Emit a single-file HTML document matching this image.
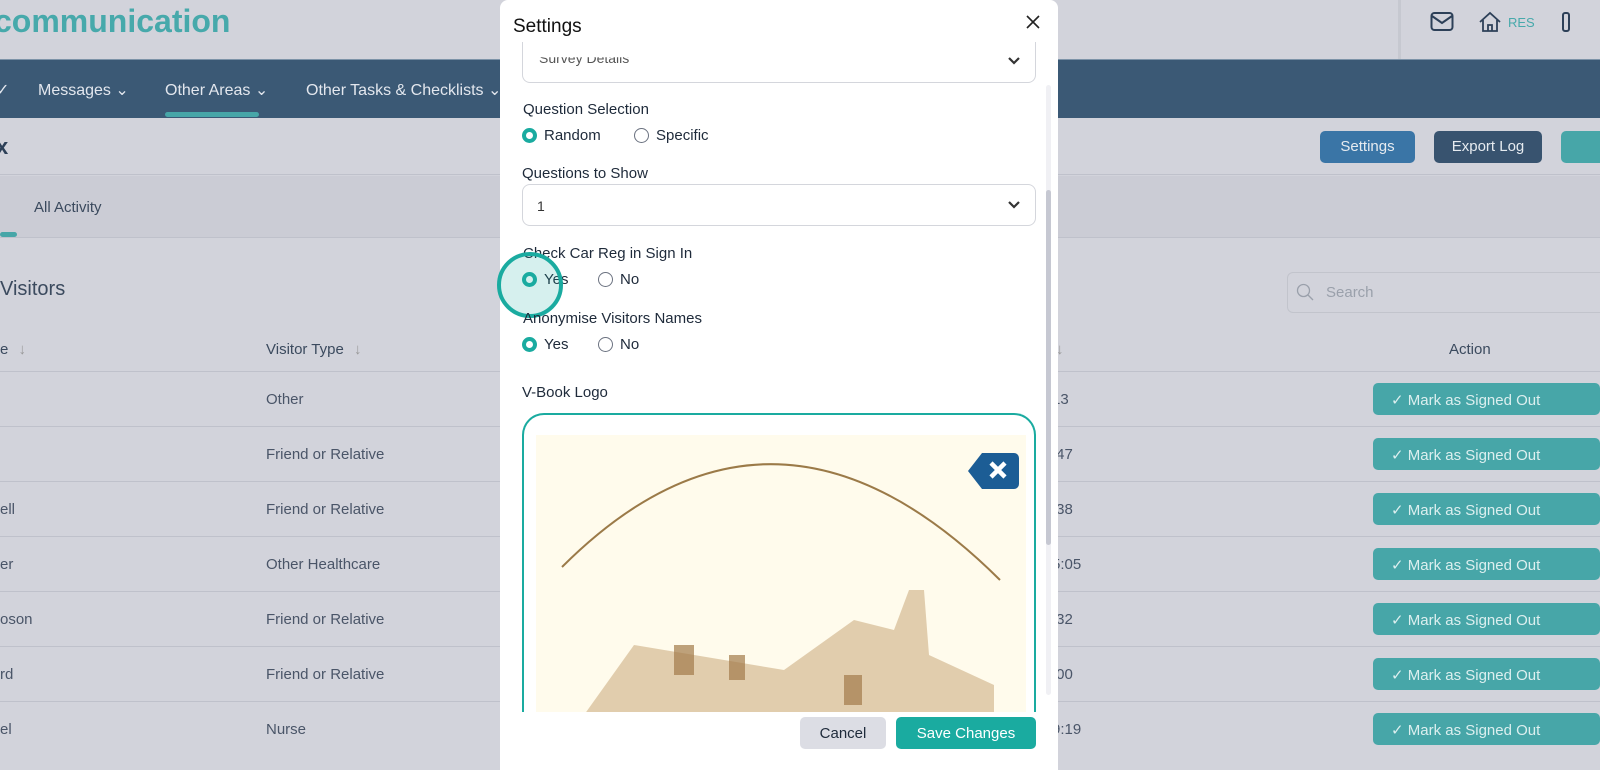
<!DOCTYPE html>
<html><head><style>
*{box-sizing:border-box;margin:0;padding:0}
body{width:1600px;height:770px;overflow:hidden;background:#d2d3db;font-family:"Liberation Sans",sans-serif;position:relative;color:#3b4a5e}
.abs{position:absolute}
.nav{top:59px;left:0;width:1600px;height:59px;background:#3b5975;border-top:1px solid #7d93a8}
.nav span{position:absolute;top:20px;color:#e3e7ee;font-size:16px}
.btn{position:absolute;border-radius:5px;color:#e6ebf0;font-size:15px;text-align:center}
.row{position:absolute;left:0;width:1600px;height:55px;border-top:1px solid #bfc1cb}
.row span{position:absolute;top:19px;font-size:15px;color:#4a5568}
.mk{position:absolute;left:1373px;top:11px;width:227px;height:32px;background:#47a6a8;border-radius:5px;color:#dcefef;font-size:15px;padding:8px 0 0 18px}
.modal{left:500px;top:0;width:558px;height:770px;background:#fff;border-radius:8px 8px 0 0}
.lbl{position:absolute;left:22px;font-size:15px;color:#1e2a3a}
.radio{position:absolute;width:15px;height:15px;border-radius:50%;border:1.5px solid #6b7280}
.radio.on{border:4px solid #1aaba0}
.rt{position:absolute;font-size:15px;color:#1e2a3a}
.sel{position:absolute;left:22px;width:514px;height:42px;border:1px solid #d4d6dc;border-radius:8px}
</style></head><body>
<div class="abs" style="left:-6px;top:3px;font-size:32px;font-weight:bold;color:#47a9ab">communication</div>
<div class="abs" style="left:1398px;top:0;width:3px;height:59px;background:#c6c8d0"></div>
<svg class="abs" style="left:1430px;top:11px" width="24" height="22" viewBox="0 0 24 22"><rect x="1.5" y="2" width="21" height="17" rx="3" fill="none" stroke="#2d4058" stroke-width="2"/><path d="M2 5l10 7 10-7" fill="none" stroke="#2d4058" stroke-width="2"/></svg>
<svg class="abs" style="left:1478px;top:10px" width="24" height="24" viewBox="0 0 24 24"><path d="M2 12L12 3l10 9M5 10v11h14V10M10 21v-6h4v6" fill="none" stroke="#2d4058" stroke-width="1.8"/></svg>
<div class="abs" style="left:1508px;top:15px;color:#47a9ab;font-size:13px">RES</div>
<div class="abs" style="left:1562px;top:12px;width:8px;height:20px;border:2px solid #2d4058;border-radius:3px"></div>
<div class="abs nav">
<span style="left:-4px">✓</span><span style="left:38px">Messages ⌄</span><span style="left:165px">Other Areas ⌄</span><span style="left:306px">Other Tasks &amp; Checklists ⌄</span>
<div class="abs" style="left:165px;top:52px;width:94px;height:5px;background:#47a6a8;border-radius:3px"></div></div>
<div class="abs" style="left:-4px;top:134px;font-size:22px;color:#2d4058;font-weight:bold">x</div>
<div class="btn" style="left:1320px;top:131px;width:95px;height:32px;background:#3a75a6;padding-top:7px">Settings</div>
<div class="btn" style="left:1434px;top:131px;width:108px;height:32px;background:#38536f;padding-top:7px">Export Log</div>
<div class="btn" style="left:1561px;top:131px;width:50px;height:32px;background:#47a6a8"></div>
<div class="abs" style="left:0;top:174px;width:1600px;height:1px;background:#bfc1cb"></div>
<div class="abs" style="left:0;top:176px;width:1600px;height:61px;background:#cbccd5"></div>
<div class="abs" style="left:34px;top:199px;font-size:15px">All Activity</div>
<div class="abs" style="left:0;top:232px;width:17px;height:5px;background:#47a6a8;border-radius:3px"></div>
<div class="abs" style="left:0;top:237px;width:1600px;height:1px;background:#bfc1cb"></div>
<div class="abs" style="left:0;top:278px;font-size:20px;color:#3b4a5e">Visitors</div>
<div class="abs" style="left:1287px;top:272px;width:320px;height:41px;border:1px solid #c2c4cc;border-radius:6px"></div>
<svg class="abs" style="left:1296px;top:283px" width="18" height="18" viewBox="0 0 18 18"><circle cx="7.5" cy="7.5" r="6" fill="none" stroke="#9aa0ab" stroke-width="1.3"/><path d="M12 12l5 5" stroke="#9aa0ab" stroke-width="1.3"/></svg>
<div class="abs" style="left:1326px;top:284px;font-size:15px;color:#9aa0ab">Search</div>
<div class="abs" style="left:0;top:341px;font-size:15px">e <span style="color:#999;margin-left:6px">↓</span></div>
<div class="abs" style="left:266px;top:341px;font-size:15px">Visitor Type <span style="color:#999;margin-left:6px">↓</span></div>
<div class="abs" style="left:1056px;top:341px;font-size:15px;color:#999">↓</div>
<div class="abs" style="left:1449px;top:341px;font-size:15px">Action</div>
<div class="row" style="top:371px"><span style="left:266px">Other</span><span style="left:1052px">13</span><div class="mk">✓ Mark as Signed Out</div></div>
<div class="row" style="top:426px"><span style="left:266px">Friend or Relative</span><span style="left:1052px">:47</span><div class="mk">✓ Mark as Signed Out</div></div>
<div class="row" style="top:481px"><span style="left:0">ell</span><span style="left:266px">Friend or Relative</span><span style="left:1052px">:38</span><div class="mk">✓ Mark as Signed Out</div></div>
<div class="row" style="top:536px"><span style="left:0">er</span><span style="left:266px">Other Healthcare</span><span style="left:1052px">5:05</span><div class="mk">✓ Mark as Signed Out</div></div>
<div class="row" style="top:591px"><span style="left:0">oson</span><span style="left:266px">Friend or Relative</span><span style="left:1052px">:32</span><div class="mk">✓ Mark as Signed Out</div></div>
<div class="row" style="top:646px"><span style="left:0">rd</span><span style="left:266px">Friend or Relative</span><span style="left:1052px">:00</span><div class="mk">✓ Mark as Signed Out</div></div>
<div class="row" style="top:701px"><span style="left:0">el</span><span style="left:266px">Nurse</span><span style="left:1052px">9:19</span><div class="mk">✓ Mark as Signed Out</div></div>

<div class="abs modal">
<div class="abs" style="left:13px;top:16px;font-size:19px;color:#111">Settings</div>
<svg class="abs" style="left:526px;top:15px" width="14" height="14" viewBox="0 0 14 14"><path d="M1 1l12 12M13 1L1 13" stroke="#222" stroke-width="1.6"/></svg>
<div class="sel" style="top:42px;border-top:none;border-radius:0 0 8px 8px;height:41px"><div class="abs" style="left:16px;top:8px;font-size:14px;color:#555;clip-path:inset(45% 0 0 0)">Survey Details</div><svg class="abs" style="right:14px;top:14px" width="14" height="10" viewBox="0 0 14 10"><path d="M2 2l5 5 5-5" fill="none" stroke="#333" stroke-width="2.2"/></svg></div>
<div class="abs" style="left:546px;top:85px;width:5px;height:610px;background:#f0f0f4;border-radius:3px"></div>
<div class="abs" style="left:546px;top:190px;width:5px;height:355px;background:#c6c8d2;border-radius:3px"></div>
<div class="lbl" style="left:23px;top:101px">Question Selection</div>
<div class="radio on" style="left:22px;top:128px"></div><div class="rt" style="left:44px;top:127px">Random</div>
<div class="radio" style="left:134px;top:128px"></div><div class="rt" style="left:156px;top:127px">Specific</div>
<div class="lbl" style="top:165px">Questions to Show</div>
<div class="sel" style="top:184px"><div class="abs" style="left:14px;top:13px;font-size:14px;color:#333">1</div><svg class="abs" style="right:14px;top:15px" width="14" height="10" viewBox="0 0 14 10"><path d="M2 2l5 5 5-5" fill="none" stroke="#333" stroke-width="2.2"/></svg></div>
<div class="lbl" style="left:23px;top:245px">Check Car Reg in Sign In</div>
<div class="radio on" style="left:22px;top:272px"></div><div class="rt" style="left:44px;top:271px">Yes</div>
<div class="radio" style="left:98px;top:272px"></div><div class="rt" style="left:120px;top:271px">No</div>
<div class="abs" style="left:-3px;top:252px;width:66px;height:66px;border-radius:50%;border:4px solid #1aaba0;background:rgba(26,171,160,0.18)"></div>
<div class="lbl" style="left:23px;top:310px">Anonymise Visitors Names</div>
<div class="radio on" style="left:22px;top:337px"></div><div class="rt" style="left:44px;top:336px">Yes</div>
<div class="radio" style="left:98px;top:337px"></div><div class="rt" style="left:120px;top:336px">No</div>
<div class="lbl" style="top:384px">V-Book Logo</div>
<div class="abs" style="left:22px;top:413px;width:514px;height:299px;border:2px solid #1aaba0;border-bottom:none;border-radius:22px 22px 0 0;overflow:hidden;background:#fff">
<div class="abs" style="left:12px;top:20px;width:490px;height:300px;background:#fffbec"></div>
<svg class="abs" style="left:0;top:0" width="514" height="300" viewBox="0 0 514 300"><path d="M38 152 Q250 -60 476 165" fill="none" stroke="#9b7a48" stroke-width="2"/>
<path d="M110 230 L260 255 L330 205 L370 215 L385 175 L400 175 L405 240 L470 270 L470 300 L60 300Z" fill="#c9a77a" opacity="0.55"/>
<rect x="150" y="230" width="20" height="30" fill="#a27a4a" opacity="0.7"/><rect x="205" y="240" width="16" height="25" fill="#a27a4a" opacity="0.7"/><rect x="320" y="260" width="18" height="30" fill="#a27a4a" opacity="0.7"/></svg>
<svg class="abs" style="left:444px;top:36px" width="52" height="40" viewBox="0 0 52 40"><path d="M0 20 L14 2 H46 a5 5 0 0 1 5 5 V33 a5 5 0 0 1 -5 5 H14Z" fill="#1c5d95"/><path d="M23 12l14 14M37 12L23 26" stroke="#fff" stroke-width="4.5"/></svg>
</div>
<div class="abs" style="left:0;top:712px;width:558px;height:58px;background:#fff"></div>
<div class="btn" style="left:300px;top:717px;width:86px;height:32px;background:#dcdde4;color:#1e2a3a;padding-top:8px">Cancel</div>
<div class="btn" style="left:396px;top:717px;width:140px;height:32px;background:#1aaba0;color:#fff;padding-top:8px">Save Changes</div>
</div>
</body></html>
